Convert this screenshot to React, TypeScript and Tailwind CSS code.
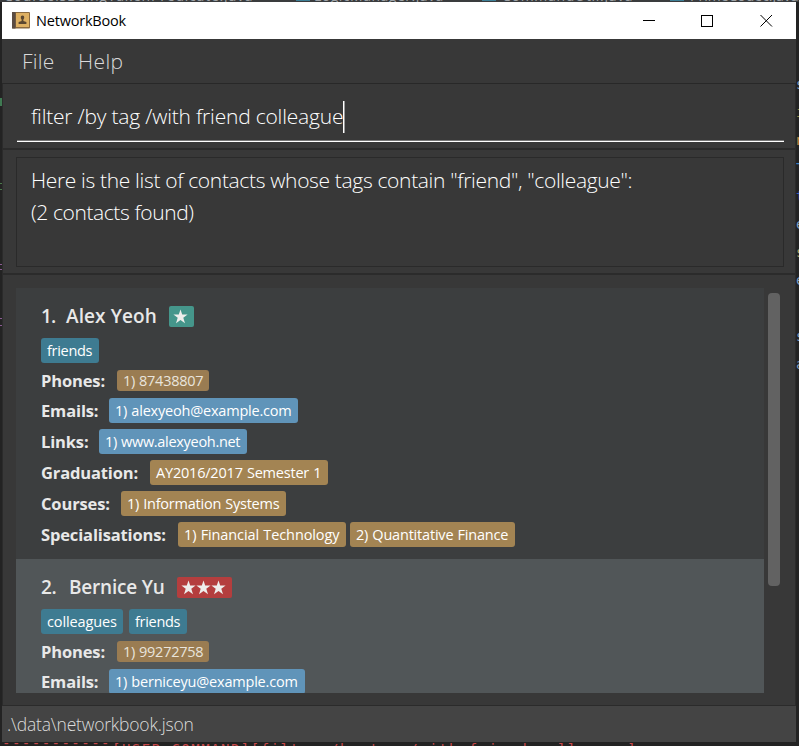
import React from "react";

const COLORS = {
  tag: "bg-[#3e7b91]",
  phone: "bg-[#9a7c52]",
  link: "bg-[#6094b9]",
  info: "bg-[#a38453]",
};

function Star() {
  return (
    <svg className="h-[15px] w-[15px] shrink-0" viewBox="0 0 15 15" fill="#eeeeec">
      <path d="M7.500 .5 9.200 5.500H14.600L10.300 8.700 12 14.200 7.500 11 3 14.200 4.700 8.700 .4 5.500H5.800Z" />
    </svg>
  );
}

function Pill({ kind, w, ls = "tracking-[-0.2px]", children }: { kind: keyof typeof COLORS; w: string; ls?: string; children: React.ReactNode }) {
  return (
    <span
      className={`flex shrink-0 items-center whitespace-pre rounded-[3px] pl-[6px] pt-px text-[14.5px] leading-none [word-spacing:0.6px] ${COLORS[kind]} ${
        kind === "phone" ? "h-[21px] text-[#e9e4dc]" : "h-[25px] text-white"
      } ${w} ${ls}`}
    >
      {children}
    </span>
  );
}

function Row({ label, lw, mt = "mt-[6px]", children }: { label: string; lw: string; mt?: string; children: React.ReactNode }) {
  return (
    <div className={`flex items-center ${mt}`}>
      <span className={`shrink-0 whitespace-pre text-[16.5px] font-bold leading-[21px] tracking-[-0.14px] text-[#e8e8e8] ${lw}`}>{label}</span>
      <div className="flex gap-1">{children}</div>
    </div>
  );
}

export default function App() {
  return (
    <div className="relative flex h-[746px] w-[799px] flex-col overflow-hidden bg-[#232323] font-['Open_Sans','Noto_Sans',sans-serif]">
      <div className="relative h-[2px] shrink-0 overflow-hidden bg-[#3a3c3e]">
        <div className="-mt-[13px] flex whitespace-pre pl-1 text-[14px] leading-[18px] text-[#a0a4a8]">
          <span className="w-[310px] shrink-0 tracking-[0.8px]">CourseIsBeingTakenPredicate.java</span>
          <span className="w-[188px] shrink-0 tracking-[0.5px]">LogicManager.java</span>
          <span className="w-[188px] shrink-0 tracking-[0.7px]">CommandUtil.java</span>
          <span className="shrink-0">PrimeCodec.java</span>
        </div>
        <div className="absolute left-[296px] top-0 h-[1px] w-[14px] bg-[#3d7f96]" />
        <div className="absolute left-[482px] top-0 h-[1px] w-[14px] bg-[#3d7f96]" />
        <div className="absolute left-[670px] top-0 h-[1px] w-[14px] bg-[#3d7f96]" />
      </div>

      <div className="ml-[2px] flex h-[740px] w-[794px] shrink-0 flex-col bg-[#383838]">
        <header className="flex h-[37px] shrink-0 items-center bg-white">
          <svg className="ml-[10px] h-[17px] w-[18px]" viewBox="0 0 18 17">
            <rect x="0" y="0" width="18" height="16.5" rx="1" fill="#8a6a40" />
            <rect x="0" y="0" width="3.5" height="16.5" fill="#5b4c42" />
            <rect x="4" y="1" width="13" height="14" fill="#deb062" />
            <path d="M10.5 3.500c1.200 0 1.800.9 1.700 1.900 0 1-.4 1.500-.8 2v1.700l3 1V12H6.600v-1.900l3-1V7.400c-.4-.5-.8-1-.8-2C8.700 4.400 9.300 3.500 10.500 3.500Z" fill="#5b4730" />
          </svg>
          <span className="ml-[6px] pt-px text-[14.5px] leading-none tracking-[-0.2px] text-black">NetworkBook</span>
          <svg className="ml-auto mr-[22px] h-[14px] w-[131px]" viewBox="0 0 131 14" fill="none" stroke="#000" shapeRendering="crispEdges">
            <path d="M0 6.500H12M58.500 1.500H69.500V12.500H58.500Z" />
            <path d="M117.500 1 129 12.500M129 1 117.500 12.500" shapeRendering="auto" />
          </svg>
        </header>

        <nav className="flex h-[45px] shrink-0 items-center gap-[24px] border-b border-[#282828] pl-[20px] text-[21px] font-light leading-none text-[#dadada]">
          <span className="w-[32px] tracking-[0.2px]">File</span>
          <span className="tracking-[0.4px]">Help</span>
        </nav>

        <section className="h-[66px] shrink-0 border-x border-b-2 border-[#2b2b2b] pl-[14px] pr-[11px]">
          <div className="flex h-[58px] flex-col border-b border-white">
            <div className="flex flex-1 items-center border-b border-[#777777] pl-[14px] pt-[9px] text-[21px] font-light leading-none text-white">
              <span className="whitespace-pre pb-px tracking-[-0.2px]">filter /by tag /with friend colleague</span>
              <span className="h-[32px] w-[2px] shrink-0 border-l border-white bg-[#9a9a9a]" />
            </div>
          </div>
        </section>

        <section className="h-[125px] shrink-0 border-x border-b-2 border-[#2b2b2b] pl-[13px] pr-[11px] pt-[7px]">
          <div className="h-[110px] border border-[#2a2a2a] pl-[14px] pt-[6px] text-[21px] font-light leading-[32px] text-white">
            <p className="whitespace-pre tracking-[-0.34px]">Here is the list of contacts whose tags contain "friend", "colleague":</p>
            <p className="whitespace-pre tracking-[-0.4px]">(2 contacts found)</p>
          </div>
        </section>

        <main className="flex h-[431px] shrink-0 border-x border-b border-[#2b2b2b] pl-[13px] pt-[13px]">
          <div className="h-[405px] w-[748px] overflow-hidden">
            <article className="h-[271px] bg-[#3c3e3f] pl-[25px] pt-[15px]">
              <div className="flex h-[27px] items-center whitespace-pre text-[19px] font-semibold text-[#e8e8e8]">
                <span className="w-[25px] tracking-[-0.8px]">1.</span>
                <span className="w-[103px] tracking-[0.1px]">Alex Yeoh</span>
                <span className="flex h-[21px] w-[25px] items-center rounded-[2px] bg-[#45968b] pl-[4px]"><Star /></span>
              </div>
              <div className="mt-[8px] flex gap-[6px]"><Pill kind="tag" w="w-[58px]" ls="tracking-[-0.3px]">friends</Pill></div>
              <Row label="Phones:" lw="w-[76px]" mt="mt-[7px]">
                <Pill kind="phone" w="w-[92px]" ls="tracking-[-0.28px]">1) 87438807</Pill>
              </Row>
              <Row label="Emails:" lw="w-[68px]" mt="mt-[7px]">
                <Pill kind="link" w="w-[189px]">1) alexyeoh@example.com</Pill>
              </Row>
              <Row label="Links:" lw="w-[58px]">
                <Pill kind="link" w="w-[148px]" ls="tracking-[-0.3px]">1) www.alexyeoh.net</Pill>
              </Row>
              <Row label="Graduation:" lw="w-[109px]">
                <Pill kind="info" w="w-[178px]">AY2016/2017 Semester 1</Pill>
              </Row>
              <Row label="Courses:" lw="w-[80px]">
                <Pill kind="info" w="w-[165px]" ls="tracking-[-0.23px]">1) Information Systems</Pill>
              </Row>
              <Row label="Specialisations:" lw="w-[137px]">
                <Pill kind="info" w="w-[168px]" ls="tracking-[-0.1px]">1) Financial Technology</Pill>
                <Pill kind="info" w="w-[165px]">2) Quantitative Finance</Pill>
              </Row>
            </article>
            <article className="h-[271px] bg-[#515658] pl-[25px] pt-[15px]">
              <div className="flex h-[27px] items-center whitespace-pre text-[19px] font-semibold text-[#e8e8e8]">
                <span className="w-[28px] tracking-[-0.3px]">2.</span>
                <span className="w-[108px] tracking-[-0.2px]">Bernice Yu</span>
                <span className="flex h-[21px] w-[55px] items-center rounded-[2px] bg-[#b43e3e] pl-[4px]"><Star /><Star /><Star /></span>
              </div>
              <div className="mt-[8px] flex gap-[6px]">
                <Pill kind="tag" w="w-[82px]" ls="tracking-[-0.12px]">colleagues</Pill>
                <Pill kind="tag" w="w-[58px]" ls="tracking-[-0.3px]">friends</Pill>
              </div>
              <Row label="Phones:" lw="w-[76px]" mt="mt-[7px]">
                <Pill kind="phone" w="w-[92px]" ls="tracking-[-0.28px]">1) 99272758</Pill>
              </Row>
              <Row label="Emails:" lw="w-[68px]" mt="mt-[7px]">
                <Pill kind="link" w="w-[196px]">1) berniceyu@example.com</Pill>
              </Row>
            </article>
          </div>
          <div className="ml-[4px] mt-[5px] h-[293px] w-[12px] rounded-[4px] bg-[#626262]" />
        </main>

        <footer className="flex min-h-0 flex-1 items-center bg-[#444444] pl-[5px] pt-[2px] text-[17.5px] font-light leading-none tracking-[-0.2px] text-[#dcdcdc]">
          .\data\networkbook.json
        </footer>
      </div>

      <div className="flex h-[4px] shrink-0 overflow-hidden whitespace-pre pl-[2px] font-['DejaVu_Sans_Mono',monospace] text-[14px] leading-[16px] tracking-[1.48px] text-[#c8484a]">
        <span className="-mt-[7px] w-[110px] shrink-0">-----------</span>
        <span className="-mt-[1px] shrink-0">[USER COMMAND][filter /by tag /with friend colleague]</span>
      </div>

      <div className="absolute left-[796px] top-[38px] h-[700px] w-[3px] overflow-hidden font-['DejaVu_Sans_Mono',monospace] text-[14px] text-[#7f9fc4]">
        <div className="mt-[36px] h-[28px] leading-[20px]">s</div>
        <div className="h-[28px] leading-[20px] text-[#9a8a45]">i</div>
        <div className="h-[28px] leading-[20px] text-[#c7924a]">n</div>
        <div className="h-[28px] leading-[20px] text-[#3a82c4]">T</div>
        <div className="h-[28px] leading-[20px] text-[#315fc4]">t</div>
        <div className="h-[28px] leading-[20px]">e</div>
        <div className="h-[28px] leading-[20px] text-[#b5a36a]">s</div>
        <div className="h-[56px] leading-[20px]">e</div>
        <div className="h-[28px] leading-[20px]">s</div>
        <div className="h-[28px] leading-[20px]">a</div>
      </div>
      <div className="absolute left-0 top-[98px] h-[8px] w-[2px] bg-[#3f7a52]" />
      <div className="absolute left-0 top-[183px] h-[7px] w-[2px] border-y border-[#4b7a4b]" />
      <div className="absolute left-0 top-[264px] h-[6px] w-[2px] border-y border-[#8b5c93]" />
      <div className="absolute left-0 top-[318px] h-[8px] w-[2px] border-y border-[#8b5c93]" />
    </div>
  );
}
